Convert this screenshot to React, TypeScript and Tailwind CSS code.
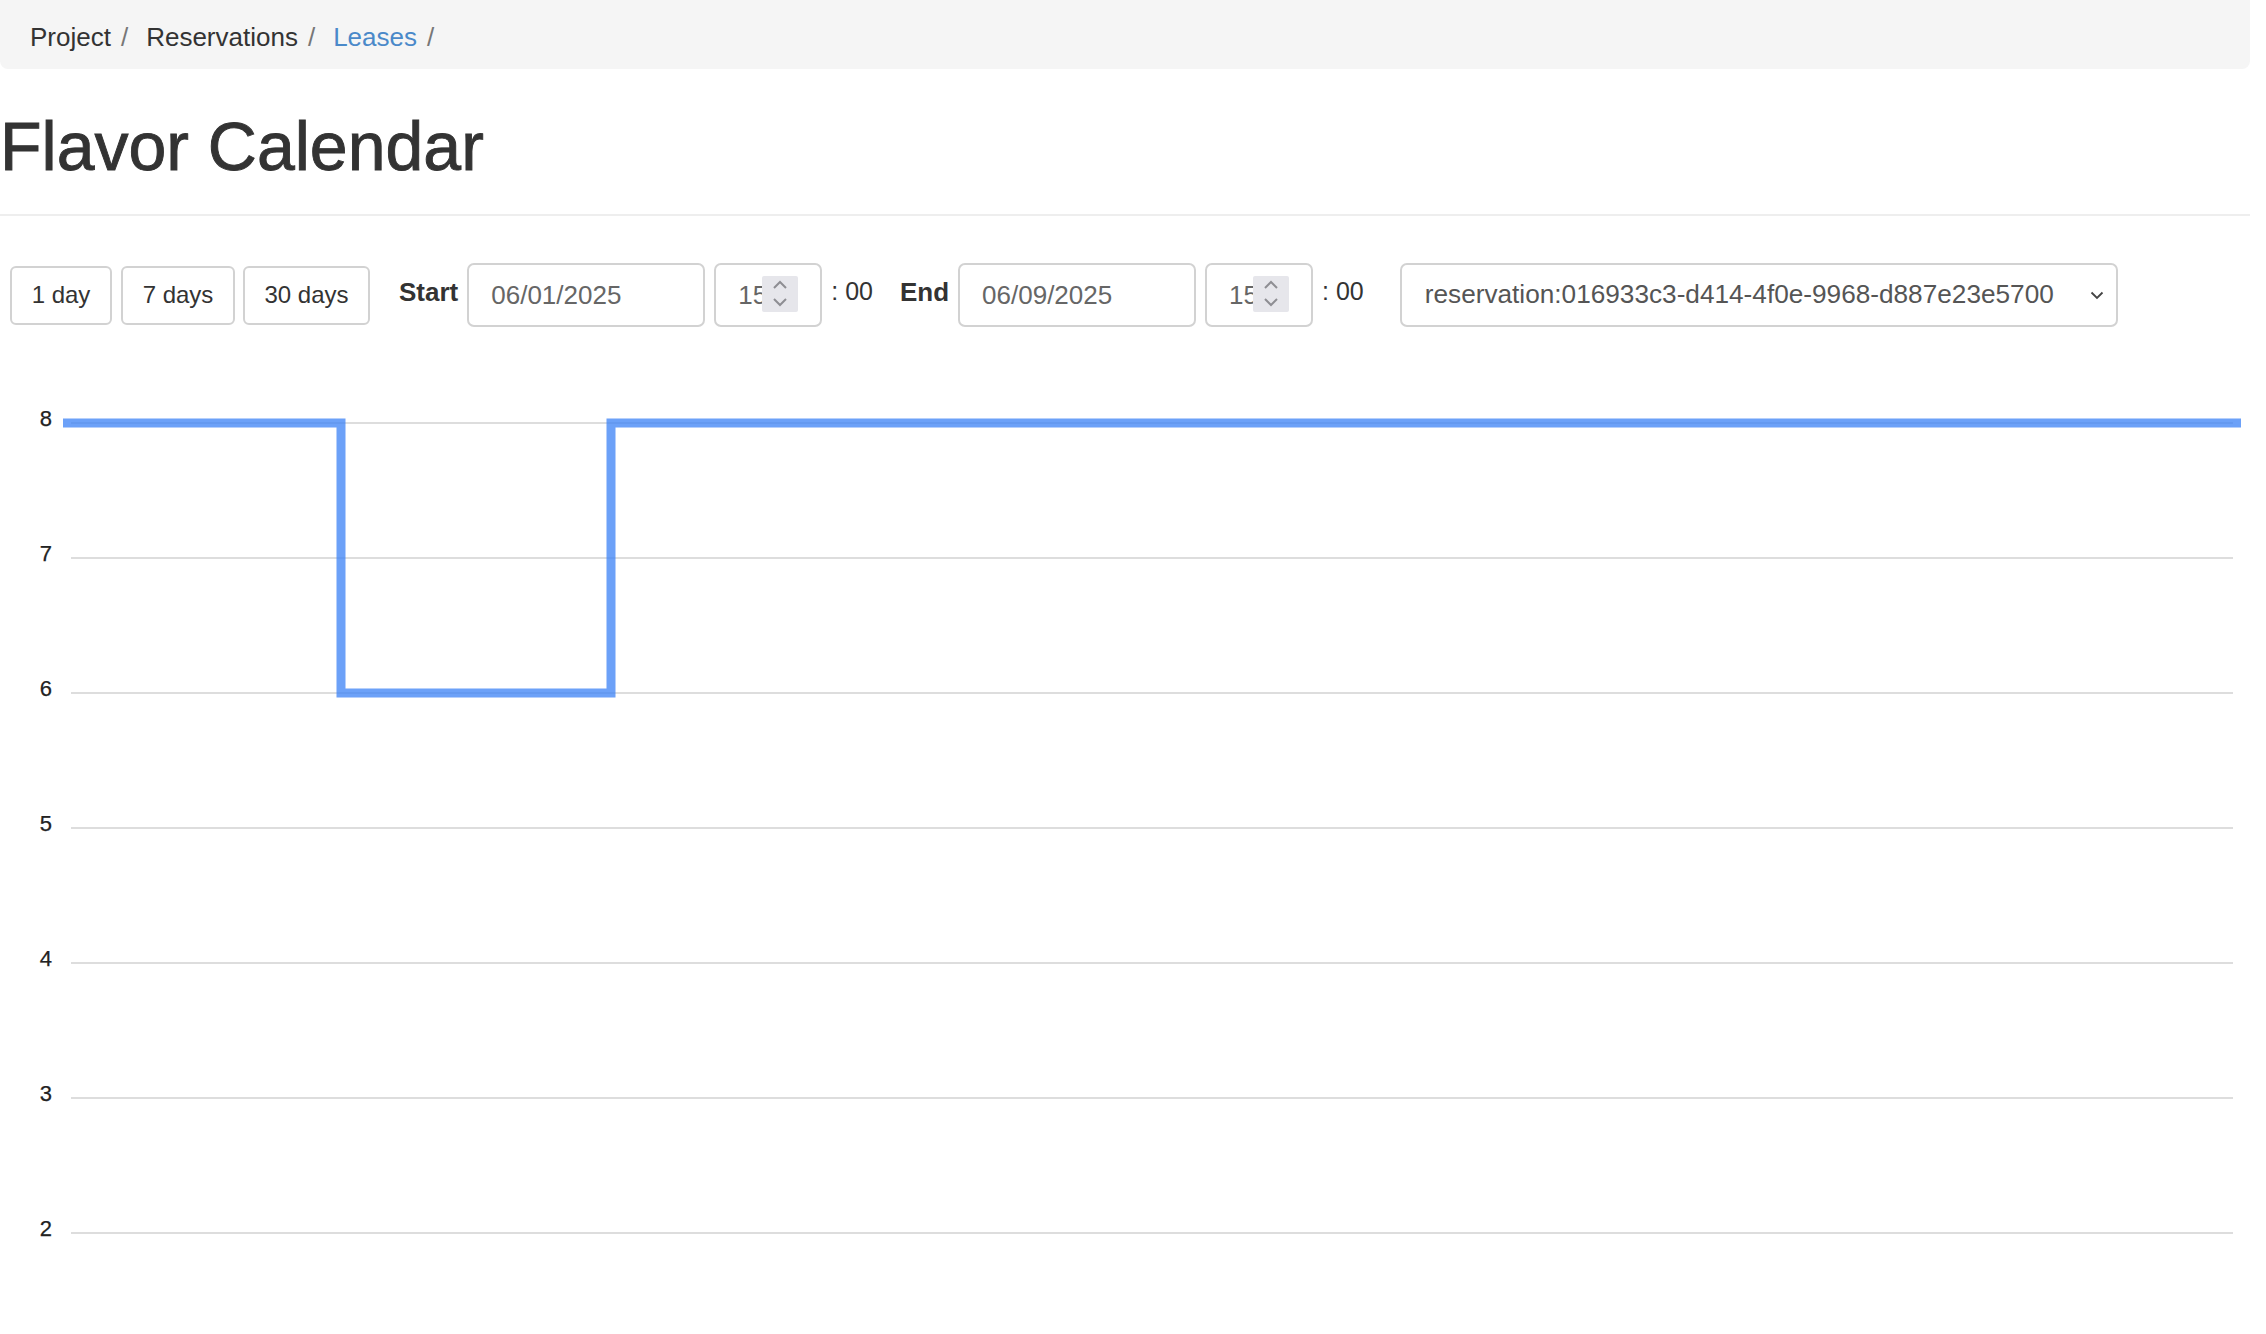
export default function App() {
  const gridY = [83, 218, 353, 488, 623, 758, 893];
  const labels = ["8", "7", "6", "5", "4", "3", "2"];

  return (
    <div className="w-[2266px] h-[1334px] bg-white font-['Liberation_Sans',Arial,sans-serif] text-[#333] overflow-hidden">
      <div className="w-[2250px]">
        {/* breadcrumb */}
        <nav className="h-[69px] bg-[#f5f5f5] rounded-b-[8px] pl-[30px] pt-[22px] flex text-[26px] leading-[30px]">
          <span>Project</span>
          <span className="ml-[10px] mr-[18px] text-[#777]">/</span>
          <span>Reservations</span>
          <span className="ml-[10px] mr-[18px] text-[#777]">/</span>
          <span className="text-[#4a89c9]">Leases</span>
          <span className="ml-[10px] text-[#777]">/</span>
        </nav>

        {/* page header */}
        <div className="mt-[41px] pb-[32px] border-b-2 border-[#eeeeee]">
          <h1 className="text-[68px] leading-[72px] font-normal text-[#333] [-webkit-text-stroke:0.9px_#333]">
            Flavor Calendar
          </h1>
        </div>

        {/* controls */}
        <div className="mt-[47px] h-[64px] flex items-center pl-[10px]">
          <button className="h-[59px] w-[102px] border-2 border-[#d2d2d2] rounded-[6px] bg-white text-[24px] text-[#333]">
            1 day
          </button>
          <button className="ml-[9px] h-[59px] w-[114px] border-2 border-[#d2d2d2] rounded-[6px] bg-white text-[24px] text-[#333]">
            7 days
          </button>
          <button className="ml-[8px] h-[59px] w-[127px] border-2 border-[#d2d2d2] rounded-[6px] bg-white text-[24px] text-[#333]">
            30 days
          </button>

          <span className="ml-[29px] -mt-[6px] text-[26px] font-bold">Start</span>
          <div className="ml-[9px] w-[238px] h-[64px] border-2 border-[#d2d2d2] rounded-[7px] pl-[22px] flex items-center text-[26px] text-[#666]">
            06/01/2025
          </div>
          <HourBox />
          <span className="ml-[9px] -mt-[6px] text-[25px]">: 00</span>

          <span className="ml-[27px] -mt-[6px] text-[26px] font-bold">End</span>
          <div className="ml-[9px] w-[238px] h-[64px] border-2 border-[#d2d2d2] rounded-[7px] pl-[22px] flex items-center text-[26px] text-[#666]">
            06/09/2025
          </div>
          <HourBox />
          <span className="ml-[9px] -mt-[6px] text-[25px]">: 00</span>

          <div className="ml-[36px] w-[718px] h-[64px] border-2 border-[#d2d2d2] rounded-[7px] pl-[23px] pr-[12px] flex items-center justify-between text-[26.2px] text-[#555]">
            <span>reservation:016933c3-d414-4f0e-9968-d887e23e5700</span>
            <svg width="14" height="10" viewBox="0 0 14 10">
              <path d="M1.5 2.5 L7 8 L12.5 2.5" fill="none" stroke="#444" strokeWidth="1.8" />
            </svg>
          </div>
        </div>
      </div>

      {/* chart */}
      <svg className="mt-[13px] block" width="2266" height="994" viewBox="0 0 2266 994">
        {gridY.map((y, i) => (
          <g key={i}>
            <line x1="71" y1={y} x2="2233" y2={y} stroke="#dddddd" strokeWidth="2" />
            <text
              x="52"
              y={y - 3}
              textAnchor="end"
              dominantBaseline="middle"
              fontSize="22"
              fill="#222"
              stroke="#222"
              strokeWidth="0.25"
              fontFamily="'Liberation Sans', Arial, sans-serif"
            >
              {labels[i]}
            </text>
          </g>
        ))}
        <path
          d="M63 83 H341 V353 H611 V83 H2241"
          fill="none"
          stroke="rgb(59,130,246)"
          strokeOpacity="0.75"
          strokeWidth="9"
          strokeLinejoin="miter"
        />
      </svg>
    </div>
  );
}

function HourBox() {
  return (
    <div className="relative ml-[9px] w-[108px] h-[64px] border-2 border-[#d2d2d2] rounded-[7px] pl-[22px] flex items-center text-[26px] text-[#666] overflow-hidden">
      <span>15</span>
      <div className="absolute left-[46px] top-[11px] w-[36px] h-[36px] bg-[#e6e6eb] rounded-[2px]">
        <svg width="36" height="36" viewBox="0 0 36 36">
          <path d="M12 12 L18 6 L24 12" fill="none" stroke="#8e8e93" strokeWidth="2" />
          <path d="M12 23 L18 29 L24 23" fill="none" stroke="#8e8e93" strokeWidth="2" />
        </svg>
      </div>
    </div>
  );
}
